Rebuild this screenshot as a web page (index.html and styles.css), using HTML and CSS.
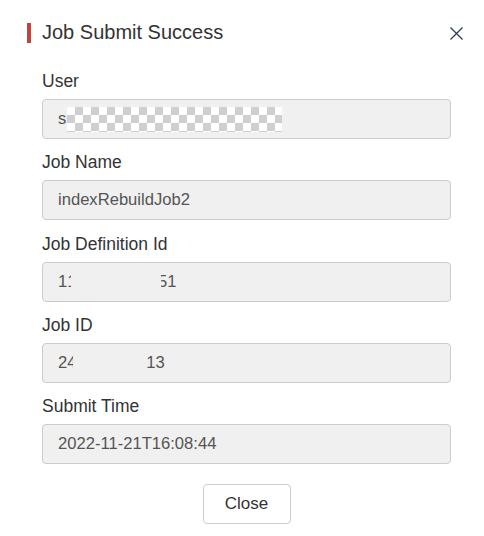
FILE: index.html
```html
<!DOCTYPE html>
<html lang="en">
<head>
<meta charset="utf-8">
<title>Job Submit Success</title>
<link rel="stylesheet" href="styles.css">
</head>
<body>
<div class="dialog">
  <div class="header">
    <div class="title"><span class="bar"></span><span class="title-text">Job Submit Success</span></div>
    <svg class="close-icon" width="13" height="13" viewBox="0 0 13 13" aria-label="close">
      <path d="M0.5 0.5 L12.5 12.5 M12.5 0.5 L0.5 12.5" stroke="#2f3e52" stroke-width="1.3" fill="none"/>
    </svg>
  </div>
  <div class="form">
    <div class="group">
      <div class="label">User</div>
      <div class="field"><span>s</span><span class="checker"></span></div>
    </div>
    <div class="group">
      <div class="label">Job Name</div>
      <div class="field"><span>indexRebuildJob2</span></div>
    </div>
    <div class="group">
      <div class="label">Job Definition Id</div>
      <div class="field"><span>1</span><span class="clip clip-a">1</span><span class="gap gap-a"></span><span class="clip clip-b">5</span><span>1</span></div>
    </div>
    <div class="group">
      <div class="label">Job ID</div>
      <div class="field"><span>2</span><span class="clip clip-c">4</span><span class="gap gap-c"></span><span>13</span></div>
    </div>
    <div class="group">
      <div class="label">Submit Time</div>
      <div class="field"><span>2022-11-21T16:08:44</span></div>
    </div>
    <div class="actions">
      <button class="btn">Close</button>
    </div>
  </div>
</div>
</body>
</html>
```
FILE: styles.css
```css
html, body {
  margin: 0;
  padding: 0;
  background: #fff;
}
body {
  font-family: "Liberation Sans", Arial, sans-serif;
  color: #333;
}
.dialog {
  padding: 21px 21px 0 27px;
}
.header {
  display: flex;
  align-items: center;
  justify-content: space-between;
  height: 23px;
}
.title {
  display: flex;
  align-items: center;
  gap: 11px;
}
.bar {
  display: block;
  width: 4px;
  height: 20px;
  background: #c0443a;
}
.title-text {
  font-size: 20px;
  line-height: 23px;
  color: #333;
}
.close-icon {
  display: block;
  margin-top: 1px;
}
.form {
  margin: 27px 12px 0 15px;
}
.group {
  margin-bottom: 13.25px;
}
.label {
  font-size: 17.5px;
  line-height: 20px;
  color: #333;
  margin-bottom: 8px;
}
.field {
  box-sizing: border-box;
  height: 40px;
  border: 1px solid #cccccc;
  border-radius: 4px;
  background: #f0f0f0;
  padding: 0 15px;
  display: flex;
  align-items: center;
  font-size: 16.6px;
  color: #555;
  white-space: pre;
}
.checker {
  display: block;
  width: 215px;
  height: 25px;
  margin-left: 1px;
  background-color: #fff;
  background-image: conic-gradient(#cfcfcf 25%, #fff 0 50%, #cfcfcf 0 75%, #fff 0);
  background-size: 16px 16px;
}
.clip {
  display: inline-block;
  overflow: hidden;
}
.clip-a {
  width: 4px;
}
.clip-c {
  width: 6px;
}
.gap {
  display: inline-block;
}
.gap-a {
  width: 90px;
}
.gap-c {
  width: 73px;
}
.clip-b {
  width: 6px;
  direction: rtl;
}
.actions {
  display: flex;
  justify-content: center;
  padding-top: 6.75px;
}
.btn {
  box-sizing: border-box;
  width: 88px;
  height: 40px;
  border: 1px solid #cccccc;
  border-radius: 4px;
  background: #fff;
  font-family: "Liberation Sans", Arial, sans-serif;
  font-size: 17px;
  color: #333;
  padding: 0;
}
```
